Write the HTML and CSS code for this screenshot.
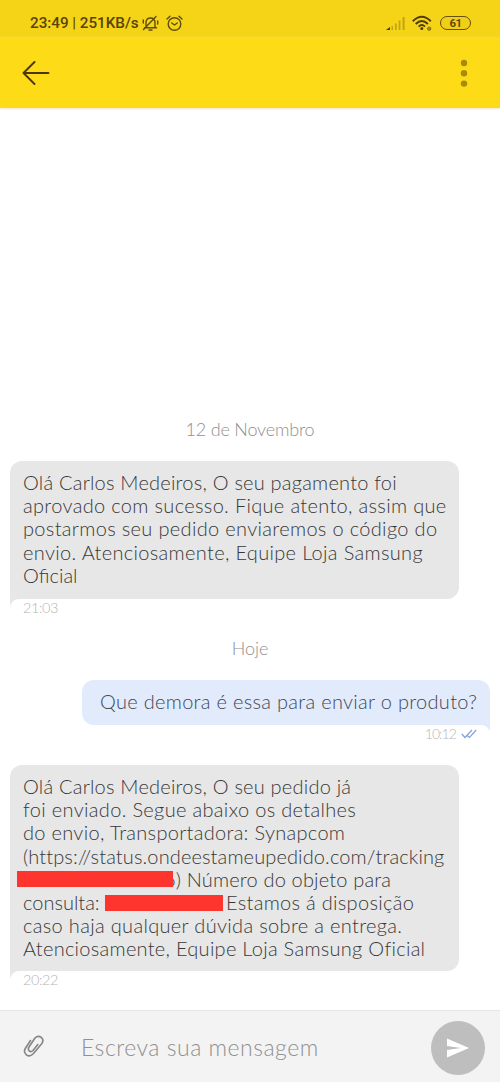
FILE: index.html
```html
<!DOCTYPE html>
<html lang="pt-BR">
<head>
<meta charset="utf-8">
<meta name="viewport" content="width=device-width">
<title>Chat</title>
<link rel="stylesheet" href="styles.css">
</head>
<body>
<div class="screen">
  <div class="statusbar">
    <span class="clock">23:49 <i class="pipe">|</i> 251KB/s</span>
    <svg class="bell" width="17" height="17" viewBox="0 0 17 17" fill="none" stroke="#5f4d0c" stroke-width="1.4" stroke-linecap="round">
      <path d="M4 12.5V7.5C4 4.5 5.800 3 8.500 3S13 4.500 13 7.500V12.500M2.500 12.700H14.500M7 15H10M1.500 14.500L14 1.500M1.300 5V8M15.700 6V9"/>
    </svg>
    <svg class="alarm" width="17" height="17" viewBox="0 0 17 17" fill="none" stroke="#5f4d0c" stroke-width="1.4" stroke-linecap="round">
      <circle cx="8.500" cy="9" r="6.300"/><path d="M5.700 8L8.500 10L11.300 8M1 4L4 1.300M13 1.300L16 4"/>
    </svg>
    <svg class="signal" width="20" height="15" viewBox="0 0 20 15">
      <path d="M0 14L4 11V14Z" fill="#4b3905"/>
      <path d="M5.500 10H7V14H5.500ZM9 7.500H10.700V14H9ZM12.700 4.500H14.400V14H12.700ZM16.600 1H18.600V14H16.600Z" fill="#c1a313"/>
    </svg>
    <svg class="wifi" width="20" height="16" viewBox="0 0 20 16" fill="none" stroke="#4f3d08" stroke-width="1.900">
      <path d="M.8 6.300Q9.800 -2.600 18.800 6.300M3.700 9Q9.800 3 15.900 9M6.600 11.600Q9.800 8.600 13 11.600"/>
      <circle cx="9.800" cy="13.500" r="1.500" fill="#4f3d08" stroke="none"/>
      <circle cx="17.200" cy="13.700" r="1.700" fill="#a58b14" stroke="#7c640c" stroke-width=".8"/>
    </svg>
    <span class="battery">61</span>
  </div>
  <div class="appbar">
    <svg width="28" height="24" viewBox="0 0 28 24" fill="none" stroke="#4b3706" stroke-width="1.900" stroke-linecap="round" stroke-linejoin="round">
      <path d="M12.500 1L1.500 12L12.500 23M1.500 12H26.500"/>
    </svg>
    <svg width="8" height="28" viewBox="0 0 8 28" fill="#a98b0b"><circle cx="4" cy="4" r="3.200"/><circle cx="4" cy="14.300" r="3.200"/><circle cx="4" cy="24.600" r="3.200"/></svg>
  </div>
  <main class="thread">
    <div class="date date-first">12 de Novembro</div>
    <div class="bubble received">
      <p class="line a1">Olá Carlos Medeiros, O seu pagamento foi</p>
      <p class="line a2">aprovado com sucesso. Fique atento, assim que</p>
      <p class="line a3">postarmos seu pedido enviaremos o código do</p>
      <p class="line a4">envio. Atenciosamente, Equipe Loja Samsung</p>
      <p class="line a5">Oficial</p>
      <svg class="tail tail-left" width="9" height="10" viewBox="0 0 9 10"><path d="M0 0H9V1Q2 1 0 9Z" fill="#e7e7e7"/></svg>
    </div>
    <div class="time time-left">21:03</div>
    <div class="date date-today">Hoje</div>
    <div class="bubble sent">
      <p class="line q">Que demora é essa para enviar o produto?</p>
      <svg class="tail tail-right" width="9" height="8" viewBox="0 0 9 8"><path d="M9 0H0V1Q6 1 9 7Z" fill="#e1ebfc"/></svg>
    </div>
    <div class="time time-right"><span>10:12</span>
      <svg width="16" height="10" viewBox="0 0 16 10" fill="none" stroke="#7fa3d4" stroke-width="1.200"><path d="M.8 5L4 8.500L11 1M5.800 6.300L8.500 8.500L15.200 1"/></svg>
    </div>
    <div class="bubble received second">
      <p class="line b1">Olá Carlos Medeiros, O seu pedido já</p>
      <p class="line b2">foi enviado. Segue abaixo os detalhes</p>
      <p class="line b3">do envio, Transportadora: Synapcom</p>
      <p class="line b4">(https://status.ondeestameupedido.com/tracking</p>
      <p class="line masked"><span class="mask mask-link"></span><span class="b5">6) Número do objeto para</span></p>
      <p class="line masked"><span class="b6">consulta:</span><span class="mask mask-code"></span><span class="b6b">Estamos á disposição</span></p>
      <p class="line b7">caso haja qualquer dúvida sobre a entrega.</p>
      <p class="line b8">Atenciosamente, Equipe Loja Samsung Oficial</p>
      <svg class="tail tail-left" width="9" height="10" viewBox="0 0 9 10"><path d="M0 0H9V1Q2 1 0 9Z" fill="#e7e7e7"/></svg>
    </div>
    <div class="time time-left">20:22</div>
  </main>
  <footer class="composer">
    <svg class="clip" width="22" height="25" viewBox="0 0 22 25" fill="none" stroke="#858585" stroke-width="1.600" stroke-linecap="round" stroke-linejoin="round">
      <path d="M7.500 5.500L2.300 13.500C-.5 18.500 5.500 23.500 10 19L18.500 9C22.500 3.500 16 -1 12 3L6.300 11.500C3.700 15.500 7.500 18 10 15.500L14.800 9.500"/>
    </svg>
    <span class="placeholder">Escreva sua mensagem</span>
    <span class="send"><svg width="24" height="20" viewBox="0 0 24 20" fill="#fff"><path d="M1 .5L23 10L1 19.500V12L15 10L1 8Z"/></svg></span>
  </footer>
</div>
</body>
</html>
```
FILE: styles.css
```css
* { box-sizing: border-box; }
body { margin: 0; background: #fff; font-family: Lato, "Open Sans", sans-serif; font-weight: 300; }
svg { display: block; flex: none; }
p { margin: 0; }
.screen { width: 500px; height: 1082px; display: flex; flex-direction: column; overflow: hidden; }
.statusbar { height: 37px; flex: none; display: flex; align-items: center; background: #f5d317; padding: 9px 29px 0 30px; color: #57440a; }
.clock { font: 500 15.200px/20px Roboto, sans-serif; width: 112px; white-space: nowrap; }
.pipe { font-style: normal; font-weight: 400; }
.alarm { margin-left: 7px; }
.signal { margin-left: auto; }
.wifi { margin-left: 6px; }
.battery { width: 31px; height: 14px; margin-left: 8px; border: 1.500px solid #655108; border-radius: 7px; font: 600 11.500px/12px Roboto, sans-serif; letter-spacing: -.5px; text-align: center; background: #efcf18; }
.appbar { height: 71px; flex: none; display: flex; align-items: center; justify-content: space-between; padding: 0 32px 0 22px; background: #fddb16; box-shadow: 0 1px 2px #e9e5cc; }
.thread { flex: 1; padding: 0 10px; }
.date { text-align: center; color: #8f8f8f; font-size: 18px; line-height: 24px; }
.date-first { margin-top: 309px; letter-spacing: -.2px; }
.date-today { margin-top: 19px; }
.bubble { position: relative; border-radius: 12px; color: #383838; font-size: 20px; }
.received { width: 449px; margin-top: 20px; padding: 10px 13px; height: 138px; background: #e7e7e7; border-bottom-left-radius: 0; }
.line { line-height: 23.200px; white-space: nowrap; }
.sent { width: 408px; height: 45px; margin: 20px 0 0 72px; padding: 10px 12px 0 18px; background: #e1ebfc; border-bottom-right-radius: 0; color: #3f4755; }
.tail { position: absolute; top: calc(100% - 1px); }
.tail-left { left: 0; }
.tail-right { right: 0; }
.time { font-size: 14.500px; line-height: 18px; height: 18px; color: #b5b5b5; letter-spacing: -.4px; }
.time-left { padding-left: 13px; }
.time-right { display: flex; justify-content: flex-end; align-items: center; gap: 5px; padding-right: 13px; font-size: 14px; letter-spacing: -.900px; }
.second { height: 206px; margin-top: 22px; }
.a1, .b1 { letter-spacing: .22px; }
.a2, .a3, .a4, .b2, .b7 { letter-spacing: .33px; }
.q, .b3, .b6b { letter-spacing: .3px; }
.b4 { letter-spacing: .12px; }
.b8 { letter-spacing: .28px; }
.masked { display: flex; align-items: center; height: 23.200px; }
.mask { background: #fe352f; height: 16px; flex: none; z-index: 1; }
.mask-link { width: 156px; margin-left: -6px; }
.mask-code { width: 118px; margin: 0 3px 0 4px; }
.b5 { margin-left: -9px; letter-spacing: .17px; }
.b6 { width: 78px; }
.composer { flex: none; height: 72px; display: flex; align-items: center; background: #f3f3f3; border-top: 1px solid #e6e6e6; padding: 3px 15px 0 23px; }
.clip { margin-top: -2px; }
.placeholder { margin-left: 36px; margin-top: -2px; font-size: 23px; letter-spacing: .5px; color: #909090; white-space: nowrap; }
.send { width: 54px; height: 54px; margin-left: auto; border-radius: 50%; background: #bebebe; display: flex; align-items: center; justify-content: center; }
```
